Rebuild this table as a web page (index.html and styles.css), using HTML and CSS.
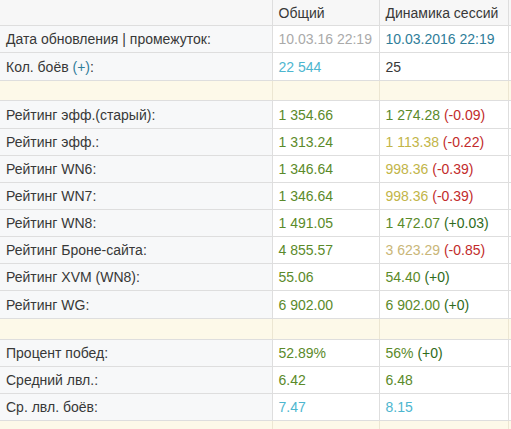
FILE: index.html
```html
<!DOCTYPE html>
<html lang="ru">
<head>
  <meta charset="UTF-8" />
  <title>Статистика</title>
  <link rel="stylesheet" href="styles.css">
</head>
<body>
  <table class="stats">
    <colgroup>
      <col class="c-label">
      <col class="c-total">
      <col class="c-session">
      <col class="c-rest">
    </colgroup>
    <tr class="head">
      <td></td>
      <td>Общий</td>
      <td>Динамика сессий</td>
      <td></td>
    </tr>
    <tr>
      <td>Дата обновления | промежуток:</td>
      <td class="gray">10.03.16 22:19</td>
      <td class="teal">10.03.2016 22:19</td>
      <td></td>
    </tr>
    <tr class="tall">
      <td>Кол. боёв <span class="teal">(+)</span>:</td>
      <td class="blue">22 544</td>
      <td>25</td>
      <td></td>
    </tr>
    <tr class="gap"><td></td><td></td><td></td><td></td></tr>
    <tr class="tall">
      <td>Рейтинг эфф.(старый):</td>
      <td class="green">1 354.66</td>
      <td><span class="green">1 274.28</span> <span class="red">(-0.09)</span></td>
      <td></td>
    </tr>
    <tr>
      <td>Рейтинг эфф.:</td>
      <td class="green">1 313.24</td>
      <td><span class="yellow">1 113.38</span> <span class="red">(-0.22)</span></td>
      <td></td>
    </tr>
    <tr>
      <td>Рейтинг WN6:</td>
      <td class="green">1 346.64</td>
      <td><span class="yellow">998.36</span> <span class="red">(-0.39)</span></td>
      <td></td>
    </tr>
    <tr>
      <td>Рейтинг WN7:</td>
      <td class="green">1 346.64</td>
      <td><span class="yellow">998.36</span> <span class="red">(-0.39)</span></td>
      <td></td>
    </tr>
    <tr>
      <td>Рейтинг WN8:</td>
      <td class="green">1 491.05</td>
      <td><span class="green">1 472.07</span> <span class="dgreen">(+0.03)</span></td>
      <td></td>
    </tr>
    <tr>
      <td>Рейтинг Броне-сайта:</td>
      <td class="green">4 855.57</td>
      <td><span class="tan">3 623.29</span> <span class="red">(-0.85)</span></td>
      <td></td>
    </tr>
    <tr>
      <td>Рейтинг XVM (WN8):</td>
      <td class="green">55.06</td>
      <td><span class="green">54.40</span> <span class="dgreen">(+0)</span></td>
      <td></td>
    </tr>
    <tr class="tall">
      <td>Рейтинг WG:</td>
      <td class="green">6 902.00</td>
      <td><span class="green">6 902.00</span> <span class="dgreen">(+0)</span></td>
      <td></td>
    </tr>
    <tr class="gap wide"><td></td><td></td><td></td><td></td></tr>
    <tr>
      <td>Процент побед:</td>
      <td class="green">52.89%</td>
      <td><span class="green">56%</span> <span class="dgreen">(+0)</span></td>
      <td></td>
    </tr>
    <tr>
      <td>Средний лвл.:</td>
      <td class="green">6.42</td>
      <td class="green">6.48</td>
      <td></td>
    </tr>
    <tr>
      <td>Ср. лвл. боёв:</td>
      <td class="blue">7.47</td>
      <td class="blue">8.15</td>
      <td></td>
    </tr>
    <tr class="gap"><td></td><td></td><td></td><td></td></tr>
  </table>
</body>
</html>
```

FILE: styles.css
```css
body {
  margin: 0;
  overflow: hidden;
  background: #fff;
  font-family: 'Liberation Sans', Arial, sans-serif;
  font-size: 14px;
  color: #383838;
}
.stats {
  border-collapse: collapse;
  table-layout: fixed;
  width: 530px;
  margin-top: -1px;
}
.c-label { width: 272px; }
.c-total { width: 107px; }
.c-session { width: 129px; }
.c-rest { width: 22px; }
.stats td {
  height: 26px;
  padding: 0 0 0 6px;
  border: 1px solid #dedede;
  white-space: nowrap;
  overflow: hidden;
  background: #fff;
}
.stats tr.tall td {
  height: 27px;
}
.stats tr td:first-child {
  border-left: none;
  background: #f7f8f9;
}
.stats tr.head td {
  height: 25px;
  background: #f7f7f7;
}
.stats tr.gap td {
  height: 19px;
  background: #fdf9e9;
  border-left-color: #ece6d2;
  border-right-color: #ece6d2;
}
.stats tr.gap.wide td {
  height: 20px;
}
.gray { color: #aaa; }
.teal { color: #2f7d99; }
.blue { color: #4db6cf; }
.green { color: #5b8a2a; }
.dgreen { color: #2e6b1c; }
.yellow { color: #c2b548; }
.tan { color: #c9b678; }
.red { color: #c22b2b; }
```
